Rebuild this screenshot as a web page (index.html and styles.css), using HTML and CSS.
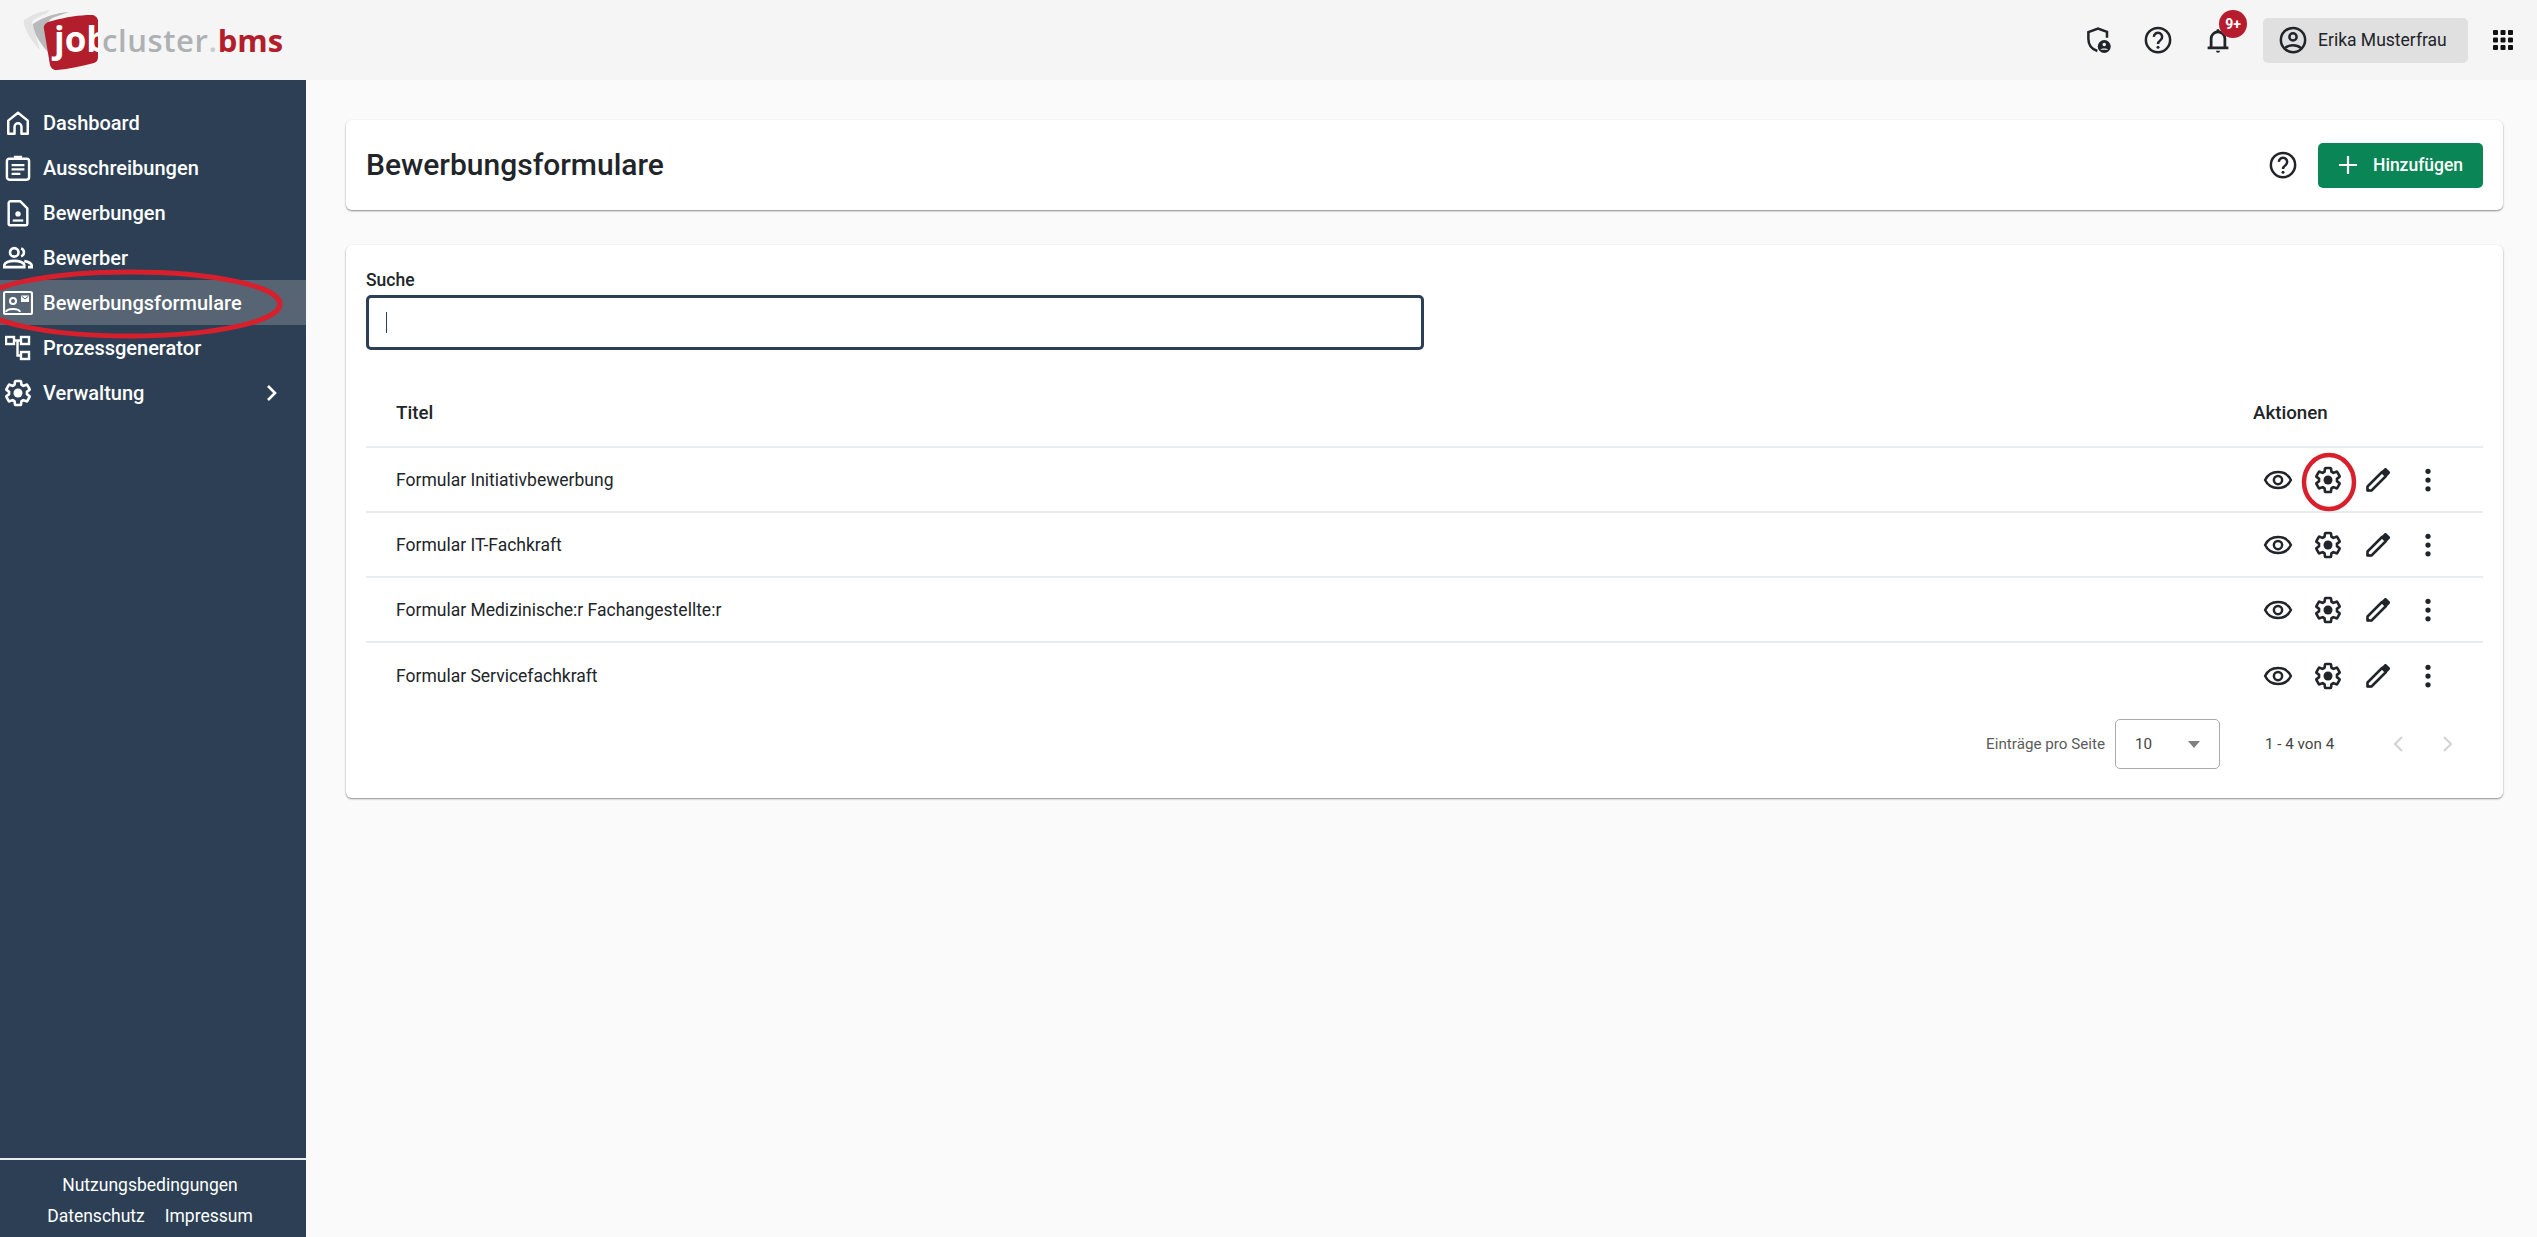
FILE: index.html
```html
<!DOCTYPE html>
<html lang="de">
<head>
<meta charset="utf-8">
<title>Bewerbungsformulare</title>
<link rel="stylesheet" href="styles.css">
</head>
<body>
<svg class="defs" width="0" height="0" aria-hidden="true">
  <symbol id="i-gear" viewBox="0 0 24 24">
    <path fill="none" stroke="currentColor" stroke-width="2.100" stroke-linejoin="round" d="M19.14 12.94c.04-.3.06-.61.06-.94 0-.32-.02-.64-.07-.94l2.03-1.58c.18-.14.23-.41.12-.61l-1.92-3.32c-.12-.22-.37-.29-.59-.22l-2.39.96c-.5-.38-1.03-.7-1.62-.94l-.36-2.54c-.04-.24-.24-.41-.48-.41h-3.84c-.24 0-.43.17-.47.41l-.36 2.54c-.59.24-1.13.57-1.62.94l-2.39-.96c-.22-.08-.47 0-.59.22L2.74 8.87c-.12.21-.08.47.12.61l2.03 1.58c-.05.3-.09.63-.09.94s.02.64.07.94l-2.03 1.58c-.18.14-.23.41-.12.61l1.92 3.32c.12.22.37.29.59.22l2.39-.96c.5.38 1.03.7 1.62.94l.36 2.54c.05.24.24.41.48.41h3.84c.24 0 .44-.17.47-.41l.36-2.54c.59-.24 1.13-.56 1.62-.94l2.39.96c.22.08.47 0 .59-.22l1.92-3.32c.12-.22.07-.47-.12-.61l-2.01-1.58z"/>
    <circle cx="12" cy="12" r="3.600" fill="currentColor"/>
  </symbol>
  <symbol id="i-eye" viewBox="0 0 24 24">
    <path fill="none" stroke="currentColor" stroke-width="2" d="M12 5.600C7.400 5.600 3.500 8.200 1.700 12c1.800 3.800 5.700 6.400 10.300 6.400s8.500-2.600 10.300-6.400C20.500 8.200 16.600 5.600 12 5.600z"/>
    <circle cx="12" cy="12" r="3.300" fill="none" stroke="currentColor" stroke-width="2"/>
  </symbol>
  <symbol id="i-pen" viewBox="0 0 24 24">
    <path fill="none" stroke="currentColor" stroke-width="2" stroke-linejoin="round" d="M3.600 20.400v-3.200L15.200 5.600l3.200 3.200L6.800 20.400z"/>
    <path fill="currentColor" d="M14.800 5l2.300-2.300c.5-.5 1.200-.5 1.700 0l2.500 2.500c.5.500.5 1.200 0 1.700L19 9.200z"/>
    <path fill="currentColor" d="M3 21v-3.600L6.600 21z"/>
  </symbol>
  <symbol id="i-dots" viewBox="0 0 24 24">
    <circle cx="12" cy="5" r="2.100" fill="currentColor"/>
    <circle cx="12" cy="12" r="2.100" fill="currentColor"/>
    <circle cx="12" cy="19" r="2.100" fill="currentColor"/>
  </symbol>
  <symbol id="i-help" viewBox="0 0 24 24">
    <circle cx="12" cy="12" r="9.700" fill="none" stroke="currentColor" stroke-width="2"/>
    <path fill="none" stroke="currentColor" stroke-width="2" d="M8.700 9.500a3.300 3.300 0 1 1 5.300 2.600c-1.200.9-2 1.500-2 3.100"/>
    <circle cx="12" cy="17.700" r="1.200" fill="currentColor"/>
  </symbol>
</svg>

<div class="app">
  <header class="topbar">
    <svg class="logo" width="300" height="80" viewBox="0 0 300 80" role="img" aria-label="jobcluster.bms">
      <defs><clipPath id="logo-clip"><path d="M52 21c14-4 28-6 39-6 4 0 6 2 7 5v37c0 3-1 5-4 6-12 3-25 6-37 7-4 0-6-2-7-5l-6-36c-1-4 2-7 8-8z"/></clipPath></defs>
      <path d="M24 20c9-6 18-9 26-10l-4 4c-6 2-11 4-14 8l8 28c-6-6-10-12-13-18-2-5-4-9-3-12z" fill="#e3e3e3"/>
      <path d="M33 24c10-7 22-11 36-12l-14 5c-6 2-8 5-7 11l5 29c-7-6-13-14-17-22-2-5-3-8-3-11z" fill="#b7b9bb"/>
      <path d="M52 21c14-4 28-6 39-6 4 0 6 2 7 5v37c0 3-1 5-4 6-12 3-25 6-37 7-4 0-6-2-7-5l-6-36c-1-4 2-7 8-8z" fill="#b21e2c"/>
      <g clip-path="url(#logo-clip)"><text class="logo-text logo-job" x="54" y="52">job</text></g>
      <text class="logo-text logo-cluster" x="102" y="52">cluster<tspan class="logo-dot">.</tspan><tspan class="logo-bms">bms</tspan></text>
    </svg>
    <div class="top-actions">
      <button class="icon-btn" aria-label="Datenschutz">
        <svg width="30" height="30" viewBox="0 0 24 24"><path fill="none" stroke="currentColor" stroke-width="2" d="M11.500 20.800C7.200 19.400 4.300 15.700 4.300 11V5.700L12 2.800l7.200 2.700v4.600"/><circle cx="17" cy="17.200" r="5.200" fill="currentColor"/><circle cx="17" cy="15.500" r="1.400" fill="#f5f5f5"/><path d="M13.900 19.800c.6-1.300 5.600-1.300 6.200 0z" fill="#f5f5f5"/></svg>
      </button>
      <button class="icon-btn" aria-label="Hilfe"><svg width="30" height="30"><use href="#i-help"/></svg></button>
      <button class="icon-btn bell" aria-label="Benachrichtigungen">
        <svg width="30" height="30" viewBox="0 0 24 24"><path fill="none" stroke="currentColor" stroke-width="2.200" d="M6.500 18V11a5.500 5.500 0 0 1 11 0v7M3.700 18.300h16.600"/><path fill="currentColor" d="M10.400 20.500h3.200a1.600 1.600 0 0 1-3.200 0zM10.700 4.500a1.300 1.300 0 0 1 2.600 0v1.200h-2.600z"/></svg>
        <span class="badge">9+</span>
      </button>
      <button class="user-chip">
        <svg width="30" height="30" viewBox="0 0 24 24"><circle cx="12" cy="12" r="9.700" fill="none" stroke="currentColor" stroke-width="2"/><circle cx="12" cy="9.500" r="2.900" fill="none" stroke="currentColor" stroke-width="2"/><path fill="none" stroke="currentColor" stroke-width="2" d="M5.500 18.500c3.500-3.200 9.500-3.200 13 0"/></svg>
        <span>Erika Musterfrau</span>
      </button>
      <button class="icon-btn apps" aria-label="Anwendungen">
        <svg width="22" height="22" viewBox="0 0 22 22" fill="currentColor"><rect x="1" y="1" width="5" height="5" rx="1"/><rect x="8.500" y="1" width="5" height="5" rx="1"/><rect x="16" y="1" width="5" height="5" rx="1"/><rect x="1" y="8.500" width="5" height="5" rx="1"/><rect x="8.500" y="8.500" width="5" height="5" rx="1"/><rect x="16" y="8.500" width="5" height="5" rx="1"/><rect x="1" y="16" width="5" height="5" rx="1"/><rect x="8.500" y="16" width="5" height="5" rx="1"/><rect x="16" y="16" width="5" height="5" rx="1"/></svg>
      </button>
    </div>
  </header>

  <div class="body-row">
    <aside class="sidebar">
      <nav class="nav">
        <a class="nav-item"><span class="nav-icon"><svg width="26" height="26" viewBox="0 0 24 24"><path fill="none" stroke="currentColor" stroke-width="2.300" stroke-linejoin="round" d="M3 22V9.800L12 2.500l9 7.300V22h-5.800v-6.500a3.200 3.200 0 0 0-6.400 0V22z"/></svg></span>Dashboard</a>
        <a class="nav-item"><span class="nav-icon"><svg width="28" height="28" viewBox="0 0 24 24"><rect x="2.500" y="4" width="19" height="18" rx="2" fill="none" stroke="currentColor" stroke-width="2.100"/><path fill="currentColor" d="M8.500 1.500h7V5h-7zM6.500 8.500h11v2h-11zM6.500 12.200h11v2h-11zM6.500 16h7.500v2H6.500z"/></svg></span>Ausschreibungen</a>
        <a class="nav-item"><span class="nav-icon"><svg width="28" height="28" viewBox="0 0 24 24"><path fill="none" stroke="currentColor" stroke-width="2.100" stroke-linejoin="round" d="M4 3.500a1.500 1.500 0 0 1 1.500-1.500H14l6 6v13.500a1 1 0 0 1-1 1H5a1 1 0 0 1-1-1z"/><circle cx="12" cy="12.800" r="2.300" fill="currentColor"/><path fill="currentColor" d="M7.500 17.500h9v1.900h-9z"/></svg></span>Bewerbungen</a>
        <a class="nav-item"><span class="nav-icon"><svg width="30" height="30" viewBox="0 0 24 24"><circle cx="9" cy="7.500" r="3.400" fill="none" stroke="currentColor" stroke-width="2.100"/><path fill="none" stroke="currentColor" stroke-width="2.100" d="M1 19.300v-1.200c0-2.500 4-3.800 8-3.800s8 1.300 8 3.800v1.200z"/><path fill="none" stroke="currentColor" stroke-width="2.100" d="M14.500 4.300a3.400 3.400 0 0 1 0 6.400M17 14.500c3.500.6 6 1.800 6 3.700v1.100h-3"/></svg></span>Bewerber</a>
        <a class="nav-item active"><span class="nav-icon"><svg width="30" height="26" viewBox="0 0 30 26"><rect x="1" y="2" width="28" height="22" rx="1.500" fill="none" stroke="currentColor" stroke-width="2.200"/><circle cx="10" cy="11" r="3" fill="none" stroke="currentColor" stroke-width="2"/><path fill="none" stroke="currentColor" stroke-width="2" d="M3 22c1-4 13-4 14 0"/><path fill="currentColor" d="M18 5.500h8v6.500h-8z"/><path fill="none" stroke="#566473" stroke-width="1" d="M18.500 6l3.500 3 3.500-3"/></svg></span>Bewerbungsformulare</a>
        <a class="nav-item"><span class="nav-icon"><svg width="26" height="26" viewBox="0 0 26 26" fill="none" stroke="currentColor" stroke-width="2.400"><rect x="1" y="2" width="8" height="7"/><rect x="16" y="2" width="8" height="7"/><rect x="16" y="17" width="8" height="7"/><path d="M9 5.500h7M12.500 5.500V20.500H16"/></svg></span>Prozessgenerator</a>
        <a class="nav-item"><span class="nav-icon"><svg width="30" height="30"><use href="#i-gear"/></svg></span>Verwaltung<svg class="nav-caret" width="14" height="18" viewBox="0 0 14 18"><path fill="none" stroke="currentColor" stroke-width="2.600" d="M3 2l7 7-7 7"/></svg></a>
      </nav>
      <footer class="side-foot">
        <a>Nutzungsbedingungen</a>
        <div class="foot-row"><a>Datenschutz</a><a>Impressum</a></div>
      </footer>
    </aside>

    <main class="main">
      <section class="card head-card">
        <h1>Bewerbungsformulare</h1>
        <div class="head-actions">
          <button class="icon-btn" aria-label="Hilfe"><svg width="30" height="30"><use href="#i-help"/></svg></button>
          <button class="add-btn">
            <svg width="24" height="24" viewBox="0 0 24 24"><path fill="none" stroke="currentColor" stroke-width="2.200" d="M12 3v18M3 12h18"/></svg>
            <span>Hinzufügen</span>
          </button>
        </div>
      </section>

      <section class="card list-card">
        <label class="search-label">Suche</label>
        <div class="search-box"><span class="caret"></span></div>

        <div class="table">
          <div class="row head-row"><div class="cell-title">Titel</div><div class="cell-actions">Aktionen</div></div>
          <div class="row">
            <div class="cell-title">Formular Initiativbewerbung</div>
            <div class="cell-actions icons">
              <span class="act"><svg width="30" height="30"><use href="#i-eye"/></svg></span>
              <span class="act"><svg width="30" height="30"><use href="#i-gear"/></svg></span>
              <span class="act"><svg width="30" height="30"><use href="#i-pen"/></svg></span>
              <span class="act"><svg width="30" height="30"><use href="#i-dots"/></svg></span>
            </div>
          </div>
          <div class="row">
            <div class="cell-title">Formular IT-Fachkraft</div>
            <div class="cell-actions icons">
              <span class="act"><svg width="30" height="30"><use href="#i-eye"/></svg></span>
              <span class="act"><svg width="30" height="30"><use href="#i-gear"/></svg></span>
              <span class="act"><svg width="30" height="30"><use href="#i-pen"/></svg></span>
              <span class="act"><svg width="30" height="30"><use href="#i-dots"/></svg></span>
            </div>
          </div>
          <div class="row">
            <div class="cell-title">Formular Medizinische:r Fachangestellte:r</div>
            <div class="cell-actions icons">
              <span class="act"><svg width="30" height="30"><use href="#i-eye"/></svg></span>
              <span class="act"><svg width="30" height="30"><use href="#i-gear"/></svg></span>
              <span class="act"><svg width="30" height="30"><use href="#i-pen"/></svg></span>
              <span class="act"><svg width="30" height="30"><use href="#i-dots"/></svg></span>
            </div>
          </div>
          <div class="row last-row">
            <div class="cell-title">Formular Servicefachkraft</div>
            <div class="cell-actions icons">
              <span class="act"><svg width="30" height="30"><use href="#i-eye"/></svg></span>
              <span class="act"><svg width="30" height="30"><use href="#i-gear"/></svg></span>
              <span class="act"><svg width="30" height="30"><use href="#i-pen"/></svg></span>
              <span class="act"><svg width="30" height="30"><use href="#i-dots"/></svg></span>
            </div>
          </div>
        </div>

        <div class="pager">
          <span class="pager-label">Einträge pro Seite</span>
          <div class="pager-select"><span>10</span><span class="tri"></span></div>
          <span class="pager-range">1 - 4 von 4</span>
          <span class="pager-nav">
            <svg width="14" height="20" viewBox="0 0 14 20"><path fill="none" stroke="currentColor" stroke-width="2" d="M11 3l-7 7 7 7"/></svg>
            <svg width="14" height="20" viewBox="0 0 14 20"><path fill="none" stroke="currentColor" stroke-width="2" d="M3 3l7 7-7 7"/></svg>
          </span>
        </div>
      </section>
    </main>
  </div>

  <svg class="marks" width="2537" height="1237" viewBox="0 0 2537 1237" aria-hidden="true">
    <ellipse cx="130" cy="304" rx="150" ry="32" fill="none" stroke="#d81f2c" stroke-width="5"/>
    <ellipse cx="2329" cy="482" rx="25" ry="27" fill="none" stroke="#d81f2c" stroke-width="4.500"/>
  </svg>
</div>
</body>
</html>
```

FILE: styles.css
```css
* { box-sizing: border-box; }
html, body { margin: 0; height: 100%; overflow: hidden; }
body { font-family: Roboto, "Liberation Sans", sans-serif; color: #212529; background: #fafafa; }
.defs { position: absolute; }
button { font: inherit; color: inherit; background: none; border: 0; padding: 0; }

.app { position: relative; display: flex; flex-direction: column; height: 100vh; }

.topbar { display: flex; align-items: center; justify-content: space-between; height: 80px; flex: none; background: #f5f5f5; padding-right: 9px; }
.logo { display: block; flex: none; }
.logo-text { font-family: "Open Sans", sans-serif; font-size: 31px; }
.logo-job { font-weight: 700; fill: #fff; font-size: 35px; }
.logo-cluster { font-weight: 600; fill: #aeb1b3; letter-spacing: .6px; }
.logo-dot { fill: #c9ccce; }
.logo-bms { font-weight: 700; fill: #b21e2c; letter-spacing: 0; }

.top-actions { display: flex; align-items: center; gap: 10px; }
.icon-btn { position: relative; display: flex; align-items: center; justify-content: center; width: 50px; height: 50px; color: #212529; }
.apps { color: #111; }
.bell { margin-right: 10px; }
.badge { position: absolute; top: -5px; left: 26px; width: 28px; height: 28px; border-radius: 50%; background: #b71c2e; color: #fff; font-size: 14px; font-weight: 700; line-height: 28px; text-align: center; }
.user-chip { display: flex; align-items: center; gap: 10px; height: 45px; width: 205px; padding: 0 15px; border-radius: 5px; background: #e0e0e0; font-size: 17.500px; color: #212529; white-space: nowrap; }

.body-row { display: flex; flex: 1; min-height: 0; }
.sidebar { display: flex; flex-direction: column; justify-content: space-between; width: 306px; flex: none; background: #2c3f54; color: #fff; padding-top: 20px; }
.nav { display: flex; flex-direction: column; }
.nav-item { display: flex; align-items: center; height: 45px; font-size: 20px; font-weight: 500; white-space: nowrap; }
.nav-item.active { background: #566473; }
.nav-icon { display: flex; align-items: center; justify-content: center; width: 36px; margin-right: 7px; }
.nav-caret { margin-left: auto; margin-right: 27px; }
.side-foot { display: flex; flex-direction: column; align-items: center; gap: 10px; height: 79px; border-top: 2px solid #e9ecef; padding: 15px 6px 0 0; font-size: 17.500px; line-height: 21px; }
.foot-row { display: flex; gap: 20px; }

.main { flex: 1; min-width: 0; padding: 40px 34px 0 40px; display: flex; flex-direction: column; gap: 35px; }
.card { background: #fff; border-radius: 6px; box-shadow: 0 1px 2px rgba(0, 0, 0, .45); }
.head-card { display: flex; align-items: center; justify-content: space-between; height: 90px; padding: 0 20px; }
h1 { margin: 0 0 2px; font-size: 30px; font-weight: 500; color: #212529; }
.head-actions { display: flex; align-items: center; gap: 10px; }
.add-btn { display: flex; align-items: center; gap: 13px; height: 45px; width: 165px; padding: 0 18px; border-radius: 5px; background: #0a8555; color: #fff; font-size: 17.500px; font-weight: 500; white-space: nowrap; }

.list-card { height: 553px; padding: 25px 20px 0; }
.search-label { display: block; font-size: 17.500px; font-weight: 500; line-height: 21px; height: 25px; color: #212529; }
.search-box { display: flex; align-items: center; width: 1058px; height: 55px; border: 3px solid #2c3f54; border-radius: 5px; padding-left: 17px; }
.caret { display: block; width: 1px; height: 21px; background: #2c3f54; }

.table { margin-top: 32px; }
.row { display: flex; align-items: center; justify-content: space-between; height: 65px; border-bottom: 2px solid #e9ecef; font-size: 17.500px; padding: 0 30px; }
.last-row { border-bottom: 0; }
.head-row { height: 66px; padding-bottom: 2px; font-size: 18.750px; font-weight: 500; }
.cell-actions { width: 200px; }
.icons { display: flex; color: #212529; }
.act { display: flex; align-items: center; justify-content: center; width: 50px; height: 50px; }

.pager { display: flex; align-items: center; justify-content: flex-end; height: 50px; margin-top: 11px; padding-right: 28px; font-size: 15.200px; color: #5c5c5c; }
.pager-label { margin-right: 10px; }
.pager-select { display: flex; align-items: center; justify-content: space-between; width: 105px; height: 50px; border: 1px solid #aaa; border-radius: 5px; padding: 0 19.500px 0 19px; color: #444; }
.tri { width: 0; height: 0; border-left: 6.500px solid transparent; border-right: 6.500px solid transparent; border-top: 7px solid #808080; }
.pager-range { margin-left: 45px; width: 126px; color: #444; }
.pager-nav { display: flex; gap: 36px; width: 64px; color: #d2d2d2; }

.marks { position: absolute; left: 0; top: 0; pointer-events: none; }
```
